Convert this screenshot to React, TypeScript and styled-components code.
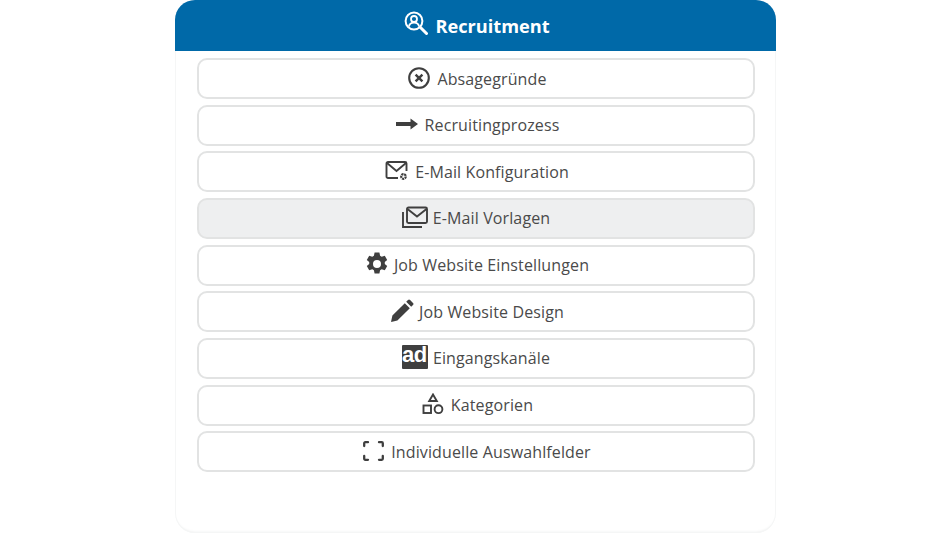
import React from "react";
import styled, { createGlobalStyle } from "styled-components";

const Global = createGlobalStyle`
  html, body { margin: 0; padding: 0; background: #fff; }
  body { width: 950px; height: 534px; overflow: hidden; font-family: "Open Sans", "Liberation Sans", sans-serif; }
`;
const Page = styled.div`
  width: 950px; height: 534px; display: flex; justify-content: center; padding-left: 1px; box-sizing: border-box;
`;
const Card = styled.section`
  width: 601px; height: 533px; box-sizing: border-box; background: #fff;
  border-radius: 20px;
  box-shadow: inset 0 0 0 1px #f5f6f6, inset 0 -3px 3px -2px #eff0f0;
  overflow: hidden;
`;
const Header = styled.header`
  height: 51px; background: #0069a8; color: #fff; display: flex; align-items: center; justify-content: center; gap: 7px;
  padding-left: 3px; font-size: 18.2px; font-weight: 700;
`;
const HeaderIcon = styled.svg`
  width: 24px; height: 24px; margin-top: -5px; flex: none;
`;
const List = styled.div`
  display: grid; grid-auto-rows: 41px; row-gap: 5.67px; padding: 7px 21px 0 22px;
`;
const Row = styled.div<{ $active?: boolean; $gap?: number; $pad?: number }>`
  height: 41px; box-sizing: border-box; border: 2px solid #e2e3e3; border-radius: 10px;
  background: ${p => (p.$active ? "#eeeff0" : "#fff")};
  display: flex; align-items: center; justify-content: center; gap: ${p => p.$gap ?? 6}px;
  padding-left: ${p => p.$pad ?? 2}px;
  color: #4a4a4a; font-size: 16px; letter-spacing: 0.12px;
`;
const Icon = styled.svg<{ $lift?: number }>`
  flex: none; color: #3f3f3f; display: block; margin-top: ${p => -(p.$lift ?? 2)}px;
`;
const AdIcon = styled.span`
  width: 26px; height: 24px; background: #3f3f3f; color: #fff; border-radius: 1px; display: flex; justify-content: center;
  font: 700 22px/20px "Liberation Sans", sans-serif; letter-spacing: -0.5px; flex: none; box-sizing: border-box;
  margin-top: -2px; margin-right: -1px; padding-right: 1px;
`;

const items: { label: string; gap?: number; pad?: number; icon: React.ReactNode; active?: boolean }[] = [
  { label: "Absagegründe", icon: (
    <Icon width="24" height="24" viewBox="0 0 24 24" fill="none" stroke="currentColor">
      <circle cx="12" cy="12" r="9.8" strokeWidth="2.1" />
      <path d="M8.6 8.6l6.8 6.8M15.4 8.6l-6.8 6.8" strokeWidth="2.4" />
    </Icon>) },
  { label: "Recruitingprozess", icon: (
    <Icon $lift={3} width="24" height="14" viewBox="0 0 24 14" fill="currentColor">
      <path d="M1 5h14.5V1.4L23 7l-7.5 5.6V9H1z" />
    </Icon>) },
  { label: "E-Mail Konfiguration", icon: (
    <Icon $lift={1} width="24" height="20" viewBox="0 0 24 20" fill="none" stroke="currentColor" strokeWidth="1.9">
      <path d="M13 17H3a1.5 1.5 0 01-1.5-1.5v-13A1.5 1.5 0 013 1h17a1.5 1.5 0 011.5 1.5V10" />
      <path d="M2 2l9.5 8L21 2" />
      <circle cx="18.5" cy="15.5" r="2.3" strokeWidth="2.2" strokeDasharray="2 0.6" />
    </Icon>) },
  { label: "E-Mail Vorlagen", active: true, gap: 5, pad: 0, icon: (
    <Icon $lift={2} width="26" height="23" viewBox="0 0 26 23" fill="none" stroke="currentColor" strokeWidth="1.9">
      <path d="M1 6v15h19" />
      <rect x="5" y="1.5" width="20" height="15.5" rx="1.5" />
      <path d="M5.5 3l9.5 7.5L24.5 3" />
    </Icon>) },
  { label: "Job Website Einstellungen", gap: 5, icon: (
    <Icon width="24" height="24" viewBox="0 0 24 24" fill="currentColor">
      <path fillRule="evenodd" d="M9.6 0.6h4.8l.7 3.2 1.6.9 3.1-1 2.4 4.2-2.4 2.2v1.8l2.4 2.2-2.4 4.2-3.1-1-1.6.9-.7 3.2H9.6l-.7-3.2-1.6-.9-3.1 1-2.4-4.2 2.4-2.2v-1.8L1.8 7.9l2.4-4.2 3.1 1 1.6-.9zM12 8a4 4 0 100 8 4 4 0 000-8z" />
    </Icon>) },
  { label: "Job Website Design", gap: 5, icon: (
    <Icon $lift={2} width="24" height="24" viewBox="0 0 24 24" fill="currentColor">
      <path d="M1 23l1.4-6.4L14.8 4.2l5 5L7.4 21.6zM16.2 2.8l1.8-1.8a1.5 1.5 0 012.1 0l2.9 2.9a1.5 1.5 0 010 2.1l-1.8 1.8z" />
    </Icon>) },
  { label: "Eingangskanäle", pad: 0, icon: <AdIcon>ad</AdIcon> },
  { label: "Kategorien", gap: 7, pad: 3, icon: (
    <Icon width="22" height="22" viewBox="0 0 22 22" fill="none" stroke="currentColor" strokeWidth="1.9">
      <path d="M11 1.5l3.8 6.5H7.2z" />
      <rect x="1.5" y="12.5" width="7.5" height="7.5" />
      <circle cx="16.5" cy="16.2" r="3.9" />
    </Icon>) },
  { label: "Individuelle Auswahlfelder", gap: 7, icon: (
    <Icon width="21" height="20" viewBox="0 0 21 20" fill="none" stroke="currentColor" strokeWidth="2.3" strokeLinecap="round">
      <path d="M1.2 5V2.2a1 1 0 011-1H5M16 1.2h2.8a1 1 0 011 1V5M19.8 15v2.8a1 1 0 01-1 1H16M5 18.8H2.2a1 1 0 01-1-1V15" />
    </Icon>) },
];

export default function App() {
  return (
    <Page>
      <Global />
      <Card>
        <Header>
          <HeaderIcon viewBox="0 0 24 24" fill="none" stroke="#fff">
            <circle cx="10" cy="10" r="8.4" strokeWidth="2" />
            <circle cx="10" cy="8" r="3" strokeWidth="1.8" />
            <path d="M5 15.5c.4-2.8 2.5-3.8 5-3.8s4.6 1 5 3.8" strokeWidth="1.8" />
            <path d="M16.5 16.5l6 6" strokeWidth="3" strokeLinecap="round" />
          </HeaderIcon>
          <span>Recruitment</span>
        </Header>
        <List>
          {items.map(it => (
            <Row key={it.label} $active={it.active} $gap={it.gap} $pad={it.pad}>
              {it.icon}
              <span>{it.label}</span>
            </Row>
          ))}
        </List>
      </Card>
    </Page>
  );
}
